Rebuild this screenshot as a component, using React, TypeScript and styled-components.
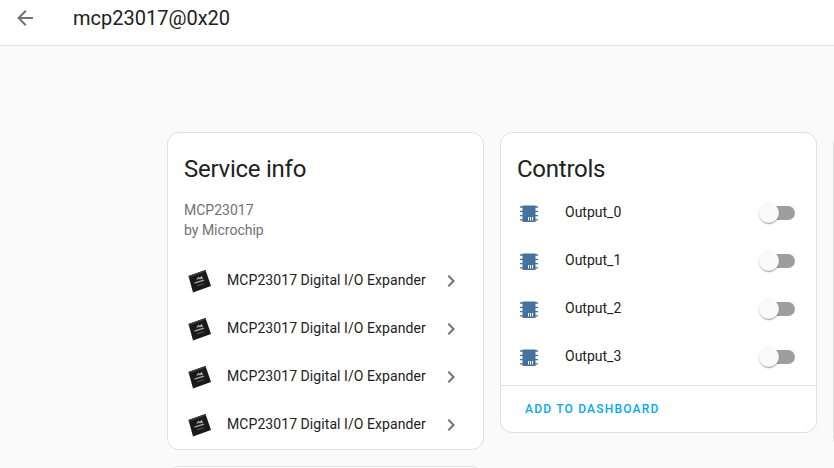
import React from "react";
import styled, { createGlobalStyle } from "styled-components";

const Global = createGlobalStyle`
  html, body { margin: 0; padding: 0; height: 100%; overflow: hidden; background: #fafafa; }
  body { font-family: Roboto, "Liberation Sans", sans-serif; color: #212121; }
  #root { height: 100%; }
`;

const Page = styled.div`
  width: 834px;
  height: 468px;
  overflow: hidden;
  display: flex;
  flex-direction: column;
`;

const Header = styled.header`
  flex: none;
  height: 36px;
  display: flex;
  align-items: center;
  background: #fff;
  border-bottom: 1px solid #e0e0e0;
  padding: 0 0 9px 13px;
`;

const BackButton = styled.button`
  width: 24px;
  height: 24px;
  padding: 0;
  border: 0;
  background: none;
  color: #727272;
  display: flex;
`;

const Title = styled.h1`
  margin: 0 0 0 36px;
  font-size: 20px;
  font-weight: 400;
  line-height: 24px;
  color: #212121;
`;

const Columns = styled.main`
  display: grid;
  grid-template-columns: repeat(3, 317px);
  column-gap: 16px;
  padding: 86px 0 0 167px;
`;

const Column = styled.div`
  display: flex;
  flex-direction: column;
  gap: 16px;
`;

const Card = styled.section<{ $h: number }>`
  background: #fff;
  border: 1px solid #e0e0e0;
  border-radius: 12px;
  box-sizing: border-box;
  flex: none;
  height: ${(p) => p.$h}px;
`;

const CardTitle = styled.h2`
  margin: 0;
  font-size: 24px;
  font-weight: 400;
  line-height: 32px;
  letter-spacing: -0.25px;
  padding: 20px 16px 0;
  color: #212121;
`;

const Meta = styled.div`
  padding: 15px 16px 0;
  font-size: 14px;
  line-height: 20px;
  color: #727272;
`;

const DeviceList = styled.div`
  margin-top: 16px;
`;

const DeviceRow = styled.div`
  height: 48px;
  display: flex;
  align-items: center;
  padding: 0 20px 0 19px;
`;

const DeviceImage = styled.svg`
  width: 26px;
  height: 26px;
  flex: none;
`;

const DeviceName = styled.span`
  flex: 1;
  margin-left: 14px;
  font-size: 14px;
  line-height: 20px;
  letter-spacing: 0.07px;
  color: #212121;
`;

const Chevron = styled.svg`
  width: 24px;
  height: 24px;
  color: #727272;
  flex: none;
  margin-top: 2px;
`;

const ControlList = styled.div`
  padding-top: 4px;
  height: 200px;
  box-sizing: border-box;
`;

const ControlRow = styled.div`
  height: 48px;
  display: flex;
  align-items: center;
  padding: 0 20px 0 16px;
`;

const ChipIcon = styled.svg`
  width: 24px;
  height: 24px;
  flex: none;
`;

const ControlName = styled.span`
  flex: 1;
  margin-left: 24px;
  font-size: 14px;
  line-height: 20px;
  color: #212121;
  position: relative;
  top: -1px;
`;

const Switch = styled.div`
  position: relative;
  width: 26px;
  height: 14px;
  border-radius: 7px;
  background: #9e9e9e;
  margin-right: 1px;
`;

const Thumb = styled.span`
  position: absolute;
  left: -10px;
  top: -3px;
  width: 20px;
  height: 20px;
  border-radius: 50%;
  background: #fafafa;
  box-shadow: 0 2px 1px -1px rgba(0,0,0,.2), 0 1px 1px 0 rgba(0,0,0,.14), 0 1px 3px 0 rgba(0,0,0,.12);
`;

const Actions = styled.div`
  border-top: 1px solid #e0e0e0;
  height: 46px;
  padding-left: 24px;
  display: flex;
  align-items: center;
`;

const ActionLink = styled.a`
  font-size: 12px;
  font-weight: 500;
  letter-spacing: 1.2px;
  color: #03a9f4;
  text-transform: uppercase;
`;

const Device = () => (
  <DeviceImage viewBox="0 0 26 26">
    <polygon points="1.500,9 18.500,3 24,19 6,25.500" fill="#1a1a1a" />
    <polygon points="1.500,9 18.500,3 19,4.500 2,10.500" fill="#3a3a3a" />
    <path d="M10 12.500l1.500-2 1.500 1.200 1.500-1.700 .8 2" stroke="#bdbdbd" strokeWidth="1.200" fill="none" />
    <path d="M7.500 16.200l9.500-3" stroke="#a8a8a8" strokeWidth="1.300" />
    <path d="M10 18.800l7-2.200" stroke="#5a5a5a" strokeWidth="1" />
  </DeviceImage>
);

const Chip = () => (
  <ChipIcon viewBox="0 0 24 24">
    <rect x="5.500" y="4.500" width="13" height="16.500" fill="#44739e" />
    <path d="M3 6h18M3 10.300h18M3 14.600h18M3 18.900h18" stroke="#44739e" strokeWidth="1.300" />
    <path d="M11.500 16v3.500M13.500 16v3.500M15.500 16v3.500" stroke="#fff" strokeWidth="1" />
  </ChipIcon>
);

const outputs = ["Output_0", "Output_1", "Output_2", "Output_3"];

export default function App() {
  return (
    <Page>
      <Global />
      <Header>
        <BackButton aria-label="Back">
          <svg width="24" height="24" viewBox="0 0 24 24" fill="currentColor">
            <path d="M20 11v2H8l5.500 5.500-1.420 1.420L4.160 12l7.920-7.920L13.500 5.500 8 11h12z" />
          </svg>
        </BackButton>
        <Title>mcp23017@0x20</Title>
      </Header>
      <Columns>
        <Column>
          <Card $h={318}>
            <CardTitle>Service info</CardTitle>
            <Meta>
              MCP23017
              <br />
              by Microchip
            </Meta>
            <DeviceList>
              {[0, 1, 2, 3].map((i) => (
                <DeviceRow key={i}>
                  <Device />
                  <DeviceName>MCP23017 Digital I/O Expander</DeviceName>
                  <Chevron viewBox="0 0 24 24" fill="currentColor">
                    <path d="M8.590 16.580L13.170 12 8.590 7.410 10 6l6 6-6 6-1.410-1.420z" />
                  </Chevron>
                </DeviceRow>
              ))}
            </DeviceList>
          </Card>
          <Card $h={100} />
        </Column>
        <Column>
          <Card $h={301}>
            <CardTitle>Controls</CardTitle>
            <ControlList>
              {outputs.map((name) => (
                <ControlRow key={name}>
                  <Chip />
                  <ControlName>{name}</ControlName>
                  <Switch>
                    <Thumb />
                  </Switch>
                </ControlRow>
              ))}
            </ControlList>
            <Actions>
              <ActionLink>Add to dashboard</ActionLink>
            </Actions>
          </Card>
        </Column>
        <Column>
          <Card $h={318} />
        </Column>
      </Columns>
    </Page>
  );
}
